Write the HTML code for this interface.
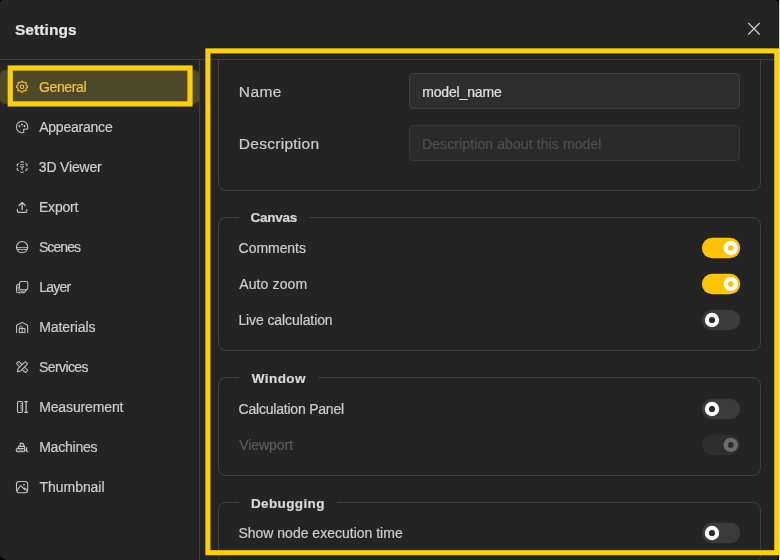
<!DOCTYPE html>
<html lang="en"><head><meta charset="utf-8"><title>Settings</title>
<style>
html,body{margin:0;padding:0;}
body{width:780px;height:560px;overflow:hidden;background:#242424;position:relative;font-family:"Liberation Sans",sans-serif;}
.t{position:absolute;white-space:nowrap;line-height:1.117;-webkit-text-stroke:0.2px currentColor;}
.abs{position:absolute;}
.card{position:absolute;left:218px;width:541px;border:1px solid #404040;border-radius:8px;box-sizing:content-box;}
.lg{position:absolute;left:239px;height:12px;background:#242424;}
.inp{position:absolute;left:409px;width:329px;height:34px;border-radius:4px;}
svg{position:absolute;left:0;top:0;}
</style></head><body>
<div class="abs" style="left:0;top:59px;width:778px;height:1px;background:#404040"></div>
<div class="abs" style="left:199px;top:60px;width:1px;height:500px;background:#404040"></div>
<div class="abs" style="left:0;top:70px;width:199px;height:34px;background:#50482a;border-radius:5px"></div>
<div class="abs" id="content" style="left:200px;top:60px;width:578px;height:500px;overflow:hidden">
 <div class="abs" style="left:-200px;top:-60px;width:780px;height:560px">
  <div class="card" style="top:20px;height:169px"></div>
  <div class="card" style="top:217px;height:132px"></div>
  <div class="card" style="top:377px;height:97px"></div>
  <div class="card" style="top:502px;height:60px"></div>
  <div class="lg" style="top:211px;width:70px"></div>
  <div class="lg" style="top:371px;width:79px"></div>
  <div class="lg" style="top:496px;width:97.5px"></div>
  <div class="inp" style="top:73px;background:#2e2e2e;border:1px solid #404040"></div>
  <div class="inp" style="top:125px;background:#2a2a2a;border:1px solid #373737"></div>
 </div>
</div>
<div id="txt" style="position:absolute;left:0;top:0;width:780px;height:560px;will-change:transform">
<span class="t" id="title" style="left:14.92px;top:20.77px;font-size:15.5px;font-weight:700;color:#e6e6e6;letter-spacing:0.087px">Settings</span>
<span class="t" id="s0" style="left:38.92px;top:80.03px;font-size:14px;font-weight:400;color:#f2c935;letter-spacing:-0.352px">General</span>
<span class="t" id="s1" style="left:39.20px;top:120.03px;font-size:14px;font-weight:400;color:#cecece;letter-spacing:-0.223px">Appearance</span>
<span class="t" id="s2" style="left:38.85px;top:160.03px;font-size:14px;font-weight:400;color:#cecece;letter-spacing:-0.183px">3D Viewer</span>
<span class="t" id="s3" style="left:39.02px;top:200.03px;font-size:14px;font-weight:400;color:#cecece;letter-spacing:-0.229px">Export</span>
<span class="t" id="s4" style="left:38.93px;top:240.03px;font-size:14px;font-weight:400;color:#cecece;letter-spacing:-0.909px">Scenes</span>
<span class="t" id="s5" style="left:39.18px;top:280.03px;font-size:14px;font-weight:400;color:#cecece;letter-spacing:-0.727px">Layer</span>
<span class="t" id="s6" style="left:39.18px;top:320.03px;font-size:14px;font-weight:400;color:#cecece;letter-spacing:-0.056px">Materials</span>
<span class="t" id="s7" style="left:38.93px;top:360.03px;font-size:14px;font-weight:400;color:#cecece;letter-spacing:-0.578px">Services</span>
<span class="t" id="s8" style="left:39.18px;top:400.03px;font-size:14px;font-weight:400;color:#cecece;letter-spacing:-0.130px">Measurement</span>
<span class="t" id="s9" style="left:39.18px;top:440.03px;font-size:14px;font-weight:400;color:#cecece;letter-spacing:-0.212px">Machines</span>
<span class="t" id="s10" style="left:39.55px;top:480.03px;font-size:14px;font-weight:400;color:#cecece;letter-spacing:-0.048px">Thumbnail</span>
<span class="t" id="name" style="left:238.87px;top:82.97px;font-size:15.5px;font-weight:400;color:#cecece;letter-spacing:0.353px">Name</span>
<span class="t" id="desc" style="left:238.87px;top:135.17px;font-size:15.5px;font-weight:400;color:#cecece;letter-spacing:0.269px">Description</span>
<span class="t" id="inp1" style="left:422.16px;top:85.03px;font-size:14px;font-weight:400;color:#e0e0e0;letter-spacing:-0.154px">model_name</span>
<span class="t" id="inp2" style="left:422.02px;top:137.03px;font-size:14px;font-weight:400;color:#4f4f4f;letter-spacing:0.104px">Description about this model</span>
<span class="t" id="lg1" style="left:250.49px;top:210.18px;font-size:13.5px;font-weight:700;color:#d8d8d8;letter-spacing:-0.271px">Canvas</span>
<span class="t" id="c1" style="left:238.61px;top:241.03px;font-size:14px;font-weight:400;color:#cecece;letter-spacing:-0.050px">Comments</span>
<span class="t" id="c2" style="left:239.20px;top:277.03px;font-size:14px;font-weight:400;color:#cecece;letter-spacing:0.125px">Auto zoom</span>
<span class="t" id="c3" style="left:238.39px;top:313.03px;font-size:14px;font-weight:400;color:#cecece;letter-spacing:-0.096px">Live calculation</span>
<span class="t" id="lg2" style="left:251.63px;top:371.08px;font-size:13.5px;font-weight:700;color:#d8d8d8;letter-spacing:0.465px">Window</span>
<span class="t" id="w1" style="left:238.61px;top:402.03px;font-size:14px;font-weight:400;color:#cecece;letter-spacing:-0.216px">Calculation Panel</span>
<span class="t" id="w2" style="left:239.20px;top:438.03px;font-size:14px;font-weight:400;color:#5c5c5c;letter-spacing:-0.049px">Viewport</span>
<span class="t" id="lg3" style="left:250.88px;top:496.08px;font-size:13.5px;font-weight:700;color:#d8d8d8;letter-spacing:0.378px">Debugging</span>
<span class="t" id="d1" style="left:238.40px;top:526.03px;font-size:14px;font-weight:400;color:#cecece;letter-spacing:0.003px">Show node execution time</span>
</div>
<svg width="780" height="560" viewBox="0 0 780 560">
<rect x="701.9" y="237.80" width="38.3" height="20.4" rx="10.2" fill="#fec401"/><circle cx="730.8" cy="248.0" r="7.2" fill="#ffffff"/><circle cx="730.8" cy="248.0" r="2.8" fill="#fec401"/><rect x="701.9" y="273.80" width="38.3" height="20.4" rx="10.2" fill="#fec401"/><circle cx="730.8" cy="284.0" r="7.2" fill="#ffffff"/><circle cx="730.8" cy="284.0" r="2.8" fill="#fec401"/><rect x="701.9" y="309.80" width="38.3" height="20.4" rx="10.2" fill="#3b3b3b"/><circle cx="712.0" cy="320.0" r="7.2" fill="#ffffff"/><circle cx="712.0" cy="320.0" r="3.1" fill="#2b2b2b"/><rect x="701.9" y="398.80" width="38.3" height="20.4" rx="10.2" fill="#3b3b3b"/><circle cx="712.0" cy="409.0" r="7.2" fill="#ffffff"/><circle cx="712.0" cy="409.0" r="3.1" fill="#2b2b2b"/><rect x="701.9" y="434.70" width="38.3" height="20.4" rx="10.2" fill="#2e2e2e"/><circle cx="730.8" cy="444.9" r="7.2" fill="#6b6b6b"/><circle cx="730.8" cy="444.9" r="2.9" fill="#2b2b2b"/><rect x="701.9" y="522.80" width="38.3" height="20.4" rx="10.2" fill="#3b3b3b"/><circle cx="712.0" cy="533.0" r="7.2" fill="#ffffff"/><circle cx="712.0" cy="533.0" r="3.1" fill="#2b2b2b"/>
<path d="M748.5 23.3 L759.4 34.2 M759.4 23.3 L748.5 34.2" stroke="#cacaca" stroke-width="1.25" fill="none" stroke-linecap="round"/>
<g fill="none" stroke="#f2c935" stroke-width="1.05" stroke-linejoin="round"><path d="M21.30 81.15 L22.80 81.15 L23.10 82.32 L24.40 82.86 L25.45 82.25 L26.50 83.30 L25.89 84.35 L26.43 85.65 L27.60 85.95 L27.60 87.45 L26.43 87.75 L25.89 89.05 L26.50 90.10 L25.45 91.15 L24.40 90.54 L23.10 91.08 L22.80 92.25 L21.30 92.25 L21.00 91.08 L19.70 90.54 L18.65 91.15 L17.60 90.10 L18.21 89.05 L17.67 87.75 L16.50 87.45 L16.50 85.95 L17.67 85.65 L18.21 84.35 L17.60 83.30 L18.65 82.25 L19.70 82.86 L21.00 82.32Z"/><circle cx="22.05" cy="86.7" r="1.75"/></g>
<g fill="none" stroke="#c6c6c6" stroke-width="1.05" stroke-linejoin="round" stroke-linecap="round"><path d="M27.8 127.6 A5.7 5.7 0 1 0 21.6 132.7 C23.4 132.9 24.4 132.1 23.7 130.8 C23.1 129.6 23.9 128.9 25.1 129.2 C26.6 129.6 27.7 129.0 27.8 127.6Z"/></g><g fill="#c6c6c6"><circle cx="19.5" cy="126.3" r="1.0"/><circle cx="22.0" cy="124.5" r="1.0"/><circle cx="24.6" cy="126.1" r="1.0"/></g>
<g fill="none" stroke="#c6c6c6" stroke-width="1.15" stroke-linecap="round" stroke-linejoin="round" transform="translate(22.1 167.1) scale(0.92) translate(-22.1 -167.1)"><path d="M20.6 161.9 L22.1 161.1 L23.6 161.9"/><path d="M20.6 172.3 L22.1 173.1 L23.6 172.3"/><path d="M18.2 163.3 L16.8 164.2 L16.8 165.8"/><path d="M26.0 163.3 L27.4 164.2 L27.4 165.8"/><path d="M16.8 168.4 L16.8 170.0 L18.2 170.9"/><path d="M27.4 168.4 L27.4 170.0 L26.0 170.9"/><path d="M20.6 164.6 L23.6 164.6"/><path d="M20.4 166.6 L22.1 167.4 L23.8 166.6 M22.1 167.4 L22.1 169.6"/></g>
<g fill="none" stroke="#c6c6c6" stroke-linecap="round" stroke-linejoin="round"><path stroke-width="1.3" d="M22.1 209.6 L22.1 202.6 M19.0 205.5 L22.1 202.4 L25.2 205.5"/><path stroke-width="1.1" d="M17.4 209.4 L17.4 211.0 A1.4 1.4 0 0 0 18.8 212.4 L25.4 212.4 A1.4 1.4 0 0 0 26.8 211.0 L26.8 209.4"/></g>
<g fill="none" stroke="#c6c6c6" stroke-width="1.05"><circle cx="22.1" cy="247.1" r="5.65"/><path stroke-width="0.85" d="M16.5 247.6 L27.7 247.6"/><path stroke-width="0.85" d="M16.9 249.3 Q22.1 250.2 27.3 249.3"/></g>
<g fill="none" stroke="#c6c6c6" stroke-width="1.05" stroke-linejoin="round"><path d="M19.6 284.3 L18.4 284.3 A1.9 1.9 0 0 0 16.5 286.2 L16.5 290.9 A1.9 1.9 0 0 0 18.4 292.8 L23.4 292.8 Q24.3 292.8 24.9 292.0 L26.8 289.4"/><path stroke-width="0.8" d="M18.1 285.6 L18.1 289.8 A1.4 1.4 0 0 0 19.5 291.2 L24.6 291.2"/><rect x="19.5" y="281.5" width="8.3" height="8.2" rx="1.8" fill="#242424"/></g>
<g fill="none" stroke="#c6c6c6" stroke-width="1.05" stroke-linejoin="round" stroke-linecap="round"><path d="M16.6 332.6 L16.6 325.2 L22.1 322.4 L27.6 325.2 L27.6 332.6"/><path d="M19.3 332.6 L19.3 328.4 L24.9 328.4 L24.9 332.6 M19.3 332.5 L24.9 332.5"/><path stroke-width="0.9" d="M22.1 328.4 L22.1 332.4 M19.8 328.2 L19.8 326.9 Q19.8 326.3 20.4 326.3 L21.6 326.3 Q22.2 326.3 22.2 326.9 L22.2 328.2"/></g>
<g fill="#242424" stroke="#c6c6c6" stroke-width="1.1" stroke-linejoin="round" transform="translate(22.1 367) scale(0.95) translate(-22.1 -367)"><rect x="20.3" y="360.2" width="3.6" height="13.6" rx="0.9" transform="rotate(-45 22.1 367)"/><path stroke-width="0.7" d="M21.9 362.0 L21.9 363.2 M21.9 370.3 L21.9 371.5" transform="rotate(-45 22.1 367)"/><path d="M20.3 361.4 A1 1 0 0 1 21.3 360.4 L22.9 360.4 A1 1 0 0 1 23.9 361.4 L23.9 371.2 L22.1 373.9 L20.3 371.2 Z" transform="rotate(45 22.1 367)"/></g>
<g fill="none" stroke="#c6c6c6" stroke-width="1.05" stroke-linejoin="round"><rect x="17.5" y="401.5" width="5.1" height="11.0" rx="1.3"/><path stroke-width="0.9" d="M22.4 403.6 L20.6 403.6 M22.4 405.8 L20.2 405.8 M22.4 408.0 L20.2 408.0 M22.4 410.2 L20.6 410.2"/><path stroke-width="1.2" d="M26.1 401.6 L26.1 412.4 M24.3 401.6 L27.9 401.6 M24.3 412.4 L27.9 412.4"/></g>
<g fill="none" stroke="#c6c6c6" stroke-width="1.15" stroke-linejoin="round" stroke-linecap="round"><path d="M20.2 446.2 L20.2 443.4 L22.2 443.4 A1.6 1.6 0 0 1 23.8 445.0 L23.8 446.2"/><path d="M18.0 448.4 L18.6 446.4 L24.6 446.4 L24.6 448.4"/><rect x="16.2" y="448.5" width="8.6" height="3.2" rx="1.6"/><path stroke-width="0.8" d="M18.2 450.1 L22.8 450.1"/><path d="M24.9 450.1 L26.2 450.1 M26.6 447.6 L26.6 450.4 A1.3 1.3 0 0 0 27.9 451.7"/></g>
<g fill="none" stroke="#c6c6c6" stroke-width="1.05" stroke-linejoin="round" stroke-linecap="round"><rect x="16.5" y="481.5" width="11.2" height="11.2" rx="2.6"/><path d="M17.0 490.8 L19.9 486.4 Q20.7 485.3 21.6 486.3 L24.9 490.0 M23.5 488.5 Q24.6 487.6 25.6 488.7 L27.3 490.6"/></g><circle cx="24.0" cy="484.7" r="0.85" fill="#c6c6c6"/>
<rect x="10.25" y="68.0" width="179.75" height="35.9" fill="none" stroke="#fed000" stroke-width="5.2"/>
<rect x="207.9" y="50.9" width="568.9" height="501.8" fill="none" stroke="#fed000" stroke-width="5.1"/>
<rect x="778.1" y="0" width="0.9" height="48.3" fill="#000" fill-opacity="0.35"/>
<rect x="778.1" y="555.3" width="0.9" height="4.7" fill="#000" fill-opacity="0.35"/>
<path d="M0 0 L2.4 0 Q0.6 0.6 0 2.6 Z" fill="#000"/>
<path d="M775.4 0 L779 0 L779 3 L778.3 3 Q777.6 0.9 775.4 0Z" fill="#000"/>
<path d="M0 555.3 Q1 558.5 6.2 560 L0 560 Z" fill="#000"/>
<path d="M779 556 L779 560 L775.6 560 Q778 559 779 556Z" fill="#000"/>
<rect x="779" y="0" width="1" height="560" fill="#ffffff" fill-opacity="0.85"/>
</svg>
</body></html>
